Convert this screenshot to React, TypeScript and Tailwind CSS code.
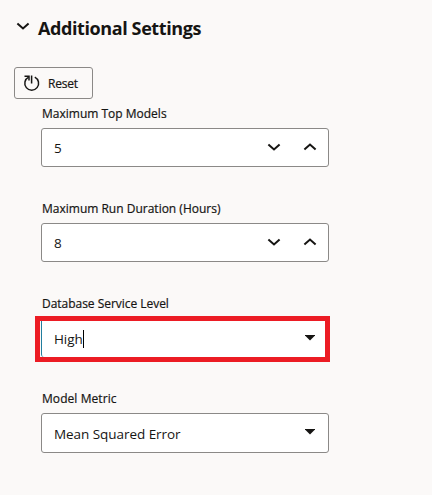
import React from 'react';

function Chevron({ up = false }: { up?: boolean }) {
  return (
    <svg width="14" height="8" viewBox="0 0 14 8" fill="none" stroke="#161513" strokeWidth="2">
      <path d={up ? 'M1.4 6.6 L7 1.6 L12.6 6.6' : 'M1.4 1.4 L7 6.4 L12.6 1.4'} />
    </svg>
  );
}

function Caret() {
  return (
    <svg className="mb-[3px]" width="10" height="6" viewBox="0 0 10 6">
      <path d="M-0.3 0.1 H10.3 L5 5.4 Z" fill="#161513" />
    </svg>
  );
}

function Label({ children, className }: { children: string; className: string }) {
  return (
    <div
      className={`ml-px h-4 whitespace-nowrap text-[12px] leading-4 [-webkit-text-stroke:0.2px_#161513] ${className}`}
    >
      {children}
    </div>
  );
}

const box =
  'flex w-72 items-center justify-between rounded-[3px] border border-[#8b8987] bg-white pl-3 leading-5';

function NumberField({ value }: { value: string }) {
  return (
    <div className={`${box} mt-[6px] h-[39px] pr-[11px]`}>
      <span className="text-[13.5px]">{value}</span>
      <div className="mb-[2px] flex gap-[22px]">
        <Chevron />
        <Chevron up />
      </div>
    </div>
  );
}

export default function App() {
  return (
    <div className="h-[495px] w-[432px] overflow-hidden bg-[#fbf9f8] font-['Open_Sans','Noto_Sans',sans-serif] text-[#161513]">
      <header className="flex h-[67px] items-start pl-4 pt-4">
        <div className="mt-[6px]">
          <Chevron />
        </div>
        <h1 className="ml-2 whitespace-nowrap text-[18px] font-bold leading-6 tracking-[-0.4px]">
          Additional Settings
        </h1>
      </header>
      <button className="ml-[14px] flex h-8 w-[79px] items-center rounded-[3px] border border-[#8b8987] pl-2 text-[12px]">
        <svg className="mb-px" width="18" height="18" viewBox="0 0 18 18" fill="none" stroke="#161513" strokeWidth="1.5">
          <path d="M11.8 3.1 A6.9 6.9 0 1 1 5.6 3.1" />
          <path d="M1.5 2.2 H6 V6.6 M8.6 1.5 V9.6" />
        </svg>
        <span className="ml-[7px] mt-px tracking-[-0.2px] [-webkit-text-stroke:0.2px_#161513]">Reset</span>
      </button>
      <main className="ml-[41px] pt-[7px]">
        <Label className="tracking-[0px]">Maximum Top Models</Label>
        <NumberField value="5" />
        <Label className="mt-[34px] tracking-[0px]">Maximum Run Duration (Hours)</Label>
        <NumberField value="8" />
        <Label className="mt-[34px] tracking-[-0.03px]">Database Service Level</Label>
        <div className="-ml-[6px] mt-1 h-[46px] w-[295px] border-[5px] border-[#ec1c24] bg-[#fbf9f8] pl-px">
          <div className="flex h-9 items-center justify-between rounded-bl-[3px] border-l border-[#227e9e] bg-white pl-3 pr-[10px] text-[13.5px] leading-5">
            <span className="mb-px flex items-center tracking-[-0.1px]">
              High<span className="h-[18px] w-px bg-black" />
            </span>
            <Caret />
          </div>
        </div>
        <Label className="mt-[29px] tracking-[0.07px]">Model Metric</Label>
        <div className={`${box} mt-[6px] h-10 pr-[13px]`}>
          <span className="mt-[2px] text-[13.5px] tracking-[-0.05px]">Mean Squared Error</span>
          <Caret />
        </div>
      </main>
    </div>
  );
}
